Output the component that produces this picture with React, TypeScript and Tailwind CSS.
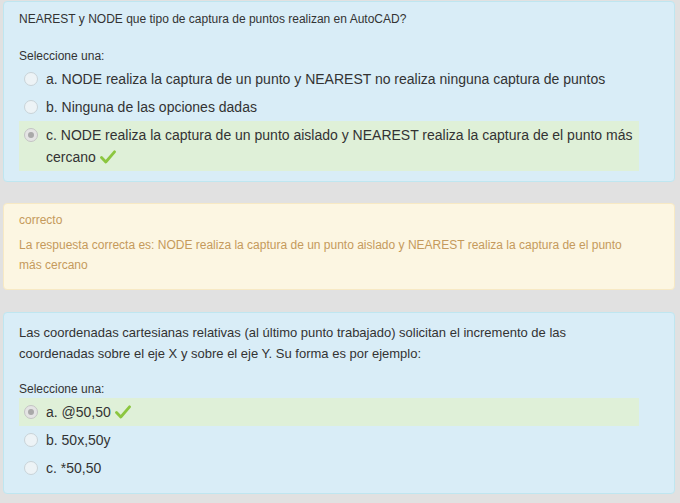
const font = { fontFamily: '"Liberation Sans", Arial, sans-serif' };

type Option = { label: string; selected?: boolean; correct?: boolean };

function Radio({ checked }: { checked?: boolean }) {
  if (checked) {
    return (
      <span className="mt-[4px] flex h-[14px] w-[14px] shrink-0 items-center justify-center rounded-full border border-[#c4c4c4] bg-[#e4e4e4]">
        <span className="h-[6px] w-[6px] rounded-full bg-[#a9a9a9]" />
      </span>
    );
  }
  return (
    <span className="mt-[4px] h-[14px] w-[14px] shrink-0 rounded-full border border-[#c9d3d8] bg-[#edf3f6]" />
  );
}

function Check() {
  return (
    <svg width="16" height="14" viewBox="0 0 16 14" className="ml-[4px] inline-block align-[-2px]">
      <path d="M1.5 7.5 L5.8 12 L14.5 1.8" fill="none" stroke="#8cc63f" strokeWidth="2.8" strokeLinecap="round" strokeLinejoin="round" />
    </svg>
  );
}

function OptionRow({ opt }: { opt: Option }) {
  return (
    <div
      className={`flex gap-[8px] py-[3px] pl-[5px] text-[14px] leading-[22px] text-[#333] ${
        opt.selected ? "bg-[#dff0d8]" : ""
      }`}
    >
      <Radio checked={opt.selected} />
      <span>
        {opt.label}
        {opt.correct && <Check />}
      </span>
    </div>
  );
}

const q1: Option[] = [
  { label: "a. NODE realiza la captura de un punto y NEAREST no realiza ninguna captura de puntos" },
  { label: "b. Ninguna de las opciones dadas" },
  {
    label: "c. NODE realiza la captura de un punto aislado y NEAREST realiza la captura de el punto más cercano",
    selected: true,
    correct: true,
  },
];

const q2: Option[] = [
  { label: "a. @50,50", selected: true, correct: true },
  { label: "b. 50x,50y" },
  { label: "c. *50,50" },
];

export default function App() {
  return (
    <div className="min-h-screen bg-[#e1e1e1] pt-[1px] pl-[3px] pr-[5px]" style={font}>
      <div className="rounded-[4px] border border-[#bfe6f0] bg-[#d9edf7] pt-[8px] pb-[10px] pl-[15px] pr-[35px]">
        <div className="text-[12px] leading-[18px] text-[#333]">
          NEAREST y NODE que tipo de captura de puntos realizan en AutoCAD?
        </div>
        <div className="mt-[19px] text-[12px] leading-[18px] text-[#333]">Seleccione una:</div>
        {q1.map((o) => (
          <OptionRow key={o.label} opt={o} />
        ))}
      </div>

      <div className="mt-[21px] rounded-[4px] border border-[#f7e9c4] bg-[#fcf6e2] pt-[7px] pb-[14px] pl-[15px] pr-[35px] text-[12px] text-[#c59a5c]">
        <div className="leading-[18px]">correcto</div>
        <div className="mt-[6px] leading-[20px]">
          La respuesta correcta es: NODE realiza la captura de un punto aislado y NEAREST realiza la
          captura de el punto más cercano
        </div>
      </div>

      <div className="mt-[22px] rounded-[4px] border border-[#bfe6f0] bg-[#d9edf7] pt-[9px] pb-[11px] pl-[15px] pr-[35px]">
        <div className="text-[13px] leading-[21px] text-[#333]">
          Las coordenadas cartesianas relativas (al último punto trabajado) solicitan el incremento de las
          coordenadas sobre el eje X y sobre el eje Y. Su forma es por ejemplo:
        </div>
        <div className="mt-[16px] text-[12px] leading-[18px] text-[#333]">Seleccione una:</div>
        {q2.map((o) => (
          <OptionRow key={o.label} opt={o} />
        ))}
      </div>
    </div>
  );
}
